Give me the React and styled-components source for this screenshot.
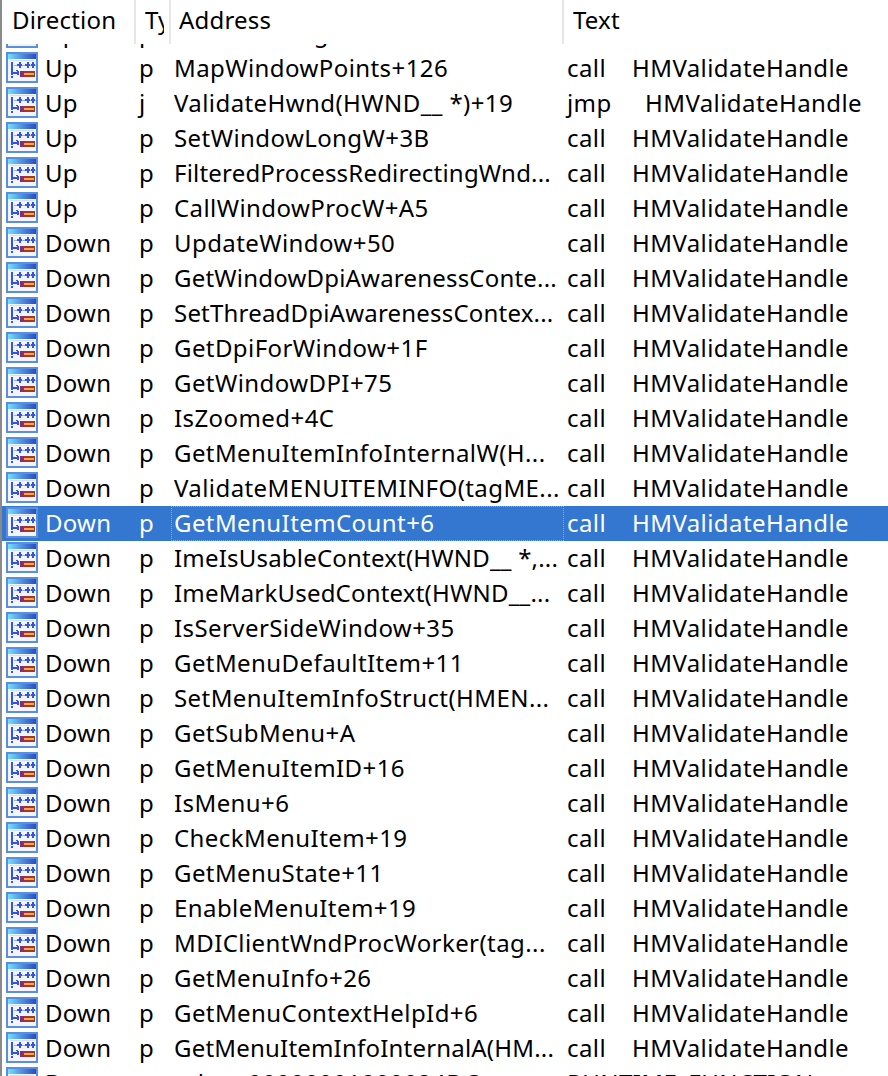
import React from 'react';
import styled, { createGlobalStyle } from 'styled-components';

const Global = createGlobalStyle`
  html, body {
    margin: 0;
    padding: 0;
    background: #fff;
  }
`;

const Window = styled.div`
  width: 888px;
  height: 1076px;
  overflow: hidden;
  box-sizing: border-box;
  border-left: 2px solid #8a8a8a;
  font-family: "Noto Sans", "Open Sans", sans-serif;
  font-size: 24px;
  letter-spacing: 0.42px;
  color: #000;
  background: #fff;
  display: flex;
  flex-direction: column;
`;

const Header = styled.div`
  flex: none;
  height: 44px;
  display: grid;
  grid-template-columns: 134px 35px 393px 1fr;
  letter-spacing: 0.2px;
`;

const HeaderCell = styled.div`
  box-sizing: border-box;
  white-space: nowrap;
  padding: 2px ${(p) => p.$clip || 0}px 0 ${(p) => p.$indent}px;
  line-height: 36px;
  border-right: ${(p) => (p.$last ? 'none' : '2px solid #e6e6e6')};
`;

const HeaderLabel = styled.div`
  overflow: hidden;
`;

const Body = styled.div`
  flex: 1;
  min-height: 0;
  overflow: hidden;
`;

const List = styled.div`
  margin-top: -28px;
`;

const Row = styled.div`
  height: 35px;
  display: grid;
  grid-template-columns: 134px 35px 393px 1fr;
  align-items: stretch;
  white-space: nowrap;
  background: ${(p) => (p.$selected ? '#3377d0' : '#fff')};
  color: ${(p) => (p.$selected ? '#fff' : '#000')};
`;

const DirectionCell = styled.div`
  display: flex;
  align-items: flex-start;
  gap: 7px;
  padding-left: 4px;
  line-height: 33px;
  letter-spacing: 0.25px;
`;

const IconWrap = styled.div`
  flex: none;
  height: 32px;
  padding-top: 1px;
`;

const TypeCell = styled.div`
  line-height: 33px;
  padding-left: 3px;
`;

const AddressCell = styled.div`
  box-sizing: border-box;
  line-height: 31px;
  padding-left: 2px;
  overflow: hidden;
  letter-spacing: ${(p) => (p.$tight ? '0.2px' : 'inherit')};
  border: 1px ${(p) => (p.$selected ? 'dotted #e9964a' : 'solid transparent')};
`;

const TextCell = styled.div`
  line-height: 33px;
  padding-left: 3px;
`;

const Mnemonic = styled.span`
  display: inline-block;
  width: ${(p) => (p.$wide ? 78 : 65)}px;
`;

const RowIcon = () => (
  <svg width="32" height="32" viewBox="0 0 32 32" shapeRendering="crispEdges">
    <defs>
      <linearGradient id="titlebar" x1="0" x2="1" y1="0" y2="0">
        <stop offset="0" stopColor="#74e0fc" />
        <stop offset="0.5" stopColor="#4f8ee0" />
        <stop offset="1" stopColor="#2a4cc0" />
      </linearGradient>
      <linearGradient id="bar" x1="0" x2="1" y1="0" y2="0">
        <stop offset="0" stopColor="#7a2a8a" />
        <stop offset="0.4" stopColor="#a8342e" />
        <stop offset="1" stopColor="#94421f" />
      </linearGradient>
    </defs>
    <rect x="0" y="0" width="32" height="31" fill="#5a8fe0" />
    <rect x="2" y="2" width="28" height="27" fill="#f1f4fc" />
    <rect x="2" y="2" width="28" height="5" fill="url(#titlebar)" />
    <rect x="4" y="8" width="24" height="1" fill="#d4def4" />
    <g fill="#3354e0">
      <rect x="5" y="10" width="2" height="13" />
      <rect x="5" y="24" width="2" height="2" />
      <rect x="5" y="20" width="8" height="2" />
      <rect x="10" y="18" width="2" height="1" />
      <rect x="11" y="19" width="2" height="4" />
      <rect x="8" y="13" width="22" height="1" opacity="0.45" />
      <rect x="11" y="12" width="5" height="2" />
      <rect x="13" y="10" width="2" height="6" />
      <rect x="19" y="12" width="5" height="2" />
      <rect x="21" y="10" width="2" height="6" />
      <rect x="25" y="12" width="4" height="2" />
      <rect x="26" y="10" width="2" height="6" />
    </g>
    <rect x="14" y="19" width="15" height="6" fill="url(#bar)" />
    <rect x="18" y="21" width="10" height="2" fill="#f5a64a" />
  </svg>
);

const up = ['MapWindowPoints+126', 'ValidateHwnd(HWND__ *)+19', 'SetWindowLongW+3B', 'FilteredProcessRedirectingWnd...', 'CallWindowProcW+A5'];
const down = [
  'UpdateWindow+50',
  'GetWindowDpiAwarenessConte...',
  'SetThreadDpiAwarenessContex...',
  'GetDpiForWindow+1F',
  'GetWindowDPI+75',
  'IsZoomed+4C',
  'GetMenuItemInfoInternalW(H...',
  'ValidateMENUITEMINFO(tagME...',
  'GetMenuItemCount+6',
  'ImeIsUsableContext(HWND__ *,...',
  'ImeMarkUsedContext(HWND__...',
  'IsServerSideWindow+35',
  'GetMenuDefaultItem+11',
  'SetMenuItemInfoStruct(HMEN...',
  'GetSubMenu+A',
  'GetMenuItemID+16',
  'IsMenu+6',
  'CheckMenuItem+19',
  'GetMenuState+11',
  'EnableMenuItem+19',
  'MDIClientWndProcWorker(tag...',
  'GetMenuInfo+26',
  'GetMenuContextHelpId+6',
  'GetMenuItemInfoInternalA(HM...',
];

// these long names run a little wide in the substitute font
const tightNames = ['FilteredProcess', 'GetWindowDpiAwareness', 'SetThreadDpi', 'ImeIsUsable', 'ImeMarkUsed', 'GetMenuItemInfoInternalA'];
const isTight = (address) => tightNames.some((name) => address.startsWith(name));

const rows = [
  { dir: 'Up', type: 'p', address: 'SetClassLong+2A' },
  ...up.map((address) => ({ dir: 'Up', type: address.startsWith('ValidateHwnd') ? 'j' : 'p', address })),
  ...down.map((address) => ({ dir: 'Down', type: 'p', address })),
];

const App = () => (
  <Window>
    <Global />
    <Header>
      <HeaderCell $indent={10}><HeaderLabel>Direction</HeaderLabel></HeaderCell>
      <HeaderCell $indent={9} $clip={5}><HeaderLabel>Type</HeaderLabel></HeaderCell>
      <HeaderCell $indent={8}><HeaderLabel>Address</HeaderLabel></HeaderCell>
      <HeaderCell $indent={9} $last><HeaderLabel>Text</HeaderLabel></HeaderCell>
    </Header>
    <Body>
      <List>
        {rows.map((row) => {
          const selected = row.address === 'GetMenuItemCount+6';
          const jump = row.type === 'j';
          return (
            <Row key={row.address} $selected={selected}>
              <DirectionCell>
                <IconWrap><RowIcon /></IconWrap>
                {row.dir}
              </DirectionCell>
              <TypeCell>{row.type}</TypeCell>
              <AddressCell $selected={selected} $tight={isTight(row.address)}>{row.address}</AddressCell>
              <TextCell>
                <Mnemonic $wide={jump}>{jump ? 'jmp' : 'call'}</Mnemonic>
                HMValidateHandle
              </TextCell>
            </Row>
          );
        })}
        <Row>
          <DirectionCell>
            <IconWrap><RowIcon /></IconWrap>
            Down
          </DirectionCell>
          <TypeCell>o</TypeCell>
          <AddressCell>pdata:00000001800024DC</AddressCell>
          <TextCell>RUNTIME_FUNCTION</TextCell>
        </Row>
      </List>
    </Body>
  </Window>
);

export default App;
